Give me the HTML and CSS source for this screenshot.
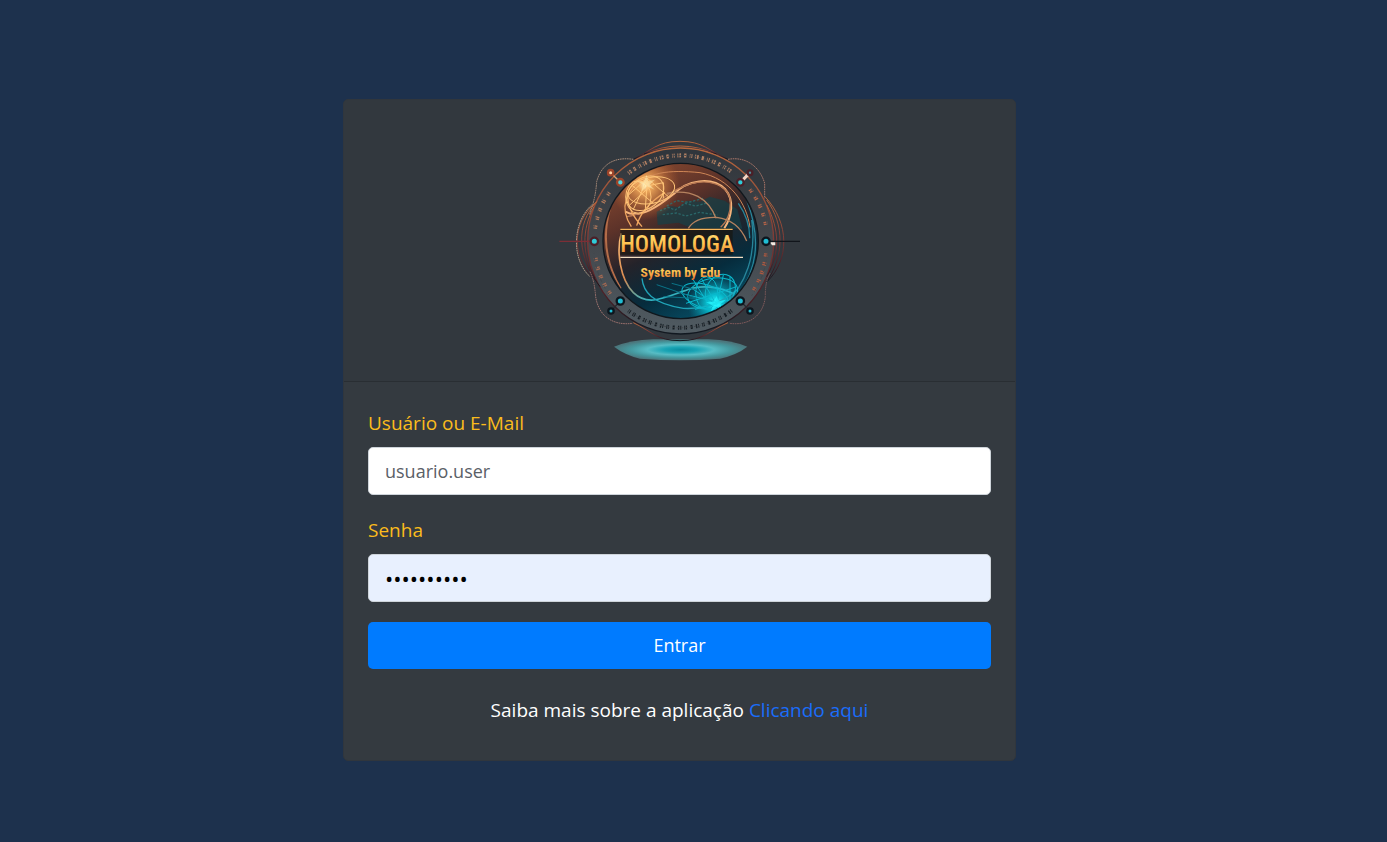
FILE: index.html
```html
<!DOCTYPE html>
<html lang="pt-BR">
<head>
    <meta charset="UTF-8">
    <meta name="viewport" content="width=device-width, initial-scale=1.0">
    <title>Homologa - Login</title>
    <link rel="stylesheet" href="styles.css">
</head>
<body>
    <main class="login-card">
        <div class="card-header">
            <svg class="logo" viewBox="0 0 780 720" role="img" aria-label="Homologa System by Edu">
                <defs>
                    <linearGradient id="sphere" x1="0.2" y1="0" x2="0.7" y2="1">
                        <stop offset="0" stop-color="#8a4a30"/>
                        <stop offset="0.3" stop-color="#5c3229"/>
                        <stop offset="0.52" stop-color="#24232a"/>
                        <stop offset="0.75" stop-color="#062c3d"/>
                        <stop offset="1" stop-color="#075067"/>
                    </linearGradient>
                    <linearGradient id="ring" x1="0" y1="0" x2="0" y2="1">
                        <stop offset="0" stop-color="#b9683c"/>
                        <stop offset="0.5" stop-color="#7d3935"/>
                        <stop offset="0.8" stop-color="#491f26"/>
                        <stop offset="1" stop-color="#101820"/>
                    </linearGradient>
                    <linearGradient id="band" x1="0" y1="0" x2="0" y2="1">
                        <stop offset="0" stop-color="#30353b"/>
                        <stop offset="0.5" stop-color="#43474c"/>
                        <stop offset="1" stop-color="#505b62"/>
                    </linearGradient>
                    <linearGradient id="wire" x1="0" y1="0" x2="0.4" y2="1">
                        <stop offset="0" stop-color="#ffc17a"/>
                        <stop offset="0.6" stop-color="#d98a50"/>
                        <stop offset="1" stop-color="#20b6cc"/>
                    </linearGradient>
                    <linearGradient id="gold" x1="0" y1="0" x2="0" y2="1">
                        <stop offset="0" stop-color="#ffe07a"/>
                        <stop offset="0.5" stop-color="#ffc350"/>
                        <stop offset="1" stop-color="#e5702c"/>
                    </linearGradient>
                    <radialGradient id="flare">
                        <stop offset="0" stop-color="#fff3c4"/>
                        <stop offset="0.2" stop-color="#ffb660" stop-opacity="0.85"/>
                        <stop offset="1" stop-color="#c8622c" stop-opacity="0"/>
                    </radialGradient>
                    <radialGradient id="spark">
                        <stop offset="0" stop-color="#35faff"/>
                        <stop offset="0.3" stop-color="#08d5e6" stop-opacity="0.85"/>
                        <stop offset="1" stop-color="#079db5" stop-opacity="0"/>
                    </radialGradient>
                    <radialGradient id="base">
                        <stop offset="0" stop-color="#0a8fa2"/>
                        <stop offset="0.25" stop-color="#1ba5b5"/>
                        <stop offset="0.5" stop-color="#57bcc4"/>
                        <stop offset="0.75" stop-color="#45999f"/>
                        <stop offset="1" stop-color="#4b777d"/>
                    </radialGradient>
                    <clipPath id="globe"><circle cx="392" cy="333" r="230"/></clipPath>
                </defs>

                <!-- light under the globe -->
                <path d="M192 650Q240 631 310 628H475Q545 631 592 650Q560 675 510 686Q390 695 270 686Q225 675 192 650Z" fill="url(#base)"/>

                <!-- outer ring -->
                <circle cx="392" cy="333" r="279" fill="url(#band)" stroke="url(#ring)" stroke-width="4"/>
                <g fill="none" stroke="url(#ring)" stroke-width="3">
                    <path d="M250 88C305 62 320 34 390 34S475 62 534 88"/>
                    <path d="M250 578C305 604 320 632 390 632S475 604 534 578"/>
                    <path d="M282 72Q390 24 500 72"/>
                    <path d="M140 215C60 280 65 390 140 454M140 215C75 285 82 380 150 470M132 230C95 300 95 370 135 445"/>
                    <path d="M645 200C720 280 718 390 652 454M650 210C705 285 702 380 650 455M650 225C690 300 690 370 650 440"/>
                </g>
                <g fill="none" stroke-width="3" stroke-dasharray="5 2">
                    <path d="M250 88C195 80 155 100 140 155Q137 205 118 255" stroke="#a98b78"/>
                    <path d="M534 88C590 78 630 112 644 160V205" stroke="#a87568"/>
                    <path d="M120 425Q133 450 137 500C145 555 185 588 248 580" stroke="#9b716d"/>
                    <path d="M660 430Q645 455 646 500C640 555 600 588 538 580" stroke="#805a5b"/>
                    <path d="M125 225C65 280 65 390 120 440" stroke="#b39b85"/>
                </g>

                <!-- runes -->
                <g fill="none" stroke-width="12">
                    <path d="M235 130A258 258 0 0 1 548 128" stroke="#b28063" stroke-dasharray="3 3 5 9 7 10 2 3 3 8"/>
                    <path d="M600 178A260 260 0 0 1 650 298" stroke="#b46449" stroke-dasharray="4 2 4 17"/>
                    <path d="M648 370A260 260 0 0 1 602 495" stroke="#ae5940" stroke-dasharray="4 2 4 17"/>
                    <path d="M545 542A260 260 0 0 1 235 542" stroke="#161e24" stroke-dasharray="3 3 4 10 6 11 3 2 3 9"/>
                    <path d="M181 492A260 260 0 0 1 135 370" stroke="#a46952" stroke-dasharray="4 2 4 17"/>
                    <path d="M135 296A260 260 0 0 1 184 178" stroke="#b27a5b" stroke-dasharray="4 2 4 17"/>
                </g>
                <g fill="none" stroke="#43474c" stroke-width="3">
                    <path d="M235 130A258 258 0 0 1 548 128" stroke-dasharray="9 7"/>
                    <path d="M545 542A260 260 0 0 1 235 542" stroke-dasharray="7 6"/>
                    <path d="M602 174A264 264 0 0 1 654 298M652 370A264 264 0 0 1 605 497M178 494A264 264 0 0 1 131 370M131 296A264 264 0 0 1 181 175" stroke-dasharray="13 9"/>
                </g>

                <!-- globe -->
                <circle cx="392" cy="333" r="233" fill="url(#sphere)" stroke="#10171d" stroke-width="4"/>
                <g clip-path="url(#globe)" fill="none">
                    <path d="M320 245l38-18 28 5 25-20 40 3 28-15 45 12 38 26 15 58H430l-45-18-62 7z" fill="#164047" opacity="0.7"/>
                    <path d="M330 242l25-10 20 8 30-20 32 8 38-10M338 254l42-5 28 9 40-11 55 8M350 228l30-16 35 5 45-12" stroke="#2a6668" stroke-width="4" stroke-dasharray="7 5"/>
                    <circle cx="285" cy="165" r="105" fill="url(#flare)"/>
                    <circle cx="497" cy="520" r="85" fill="url(#spark)"/>

                    <path d="M197 190C155 275 155 380 207 465M181 235C160 310 165 395 213 475" stroke="#b46d49" stroke-width="4"/>
                    <path d="M605 270C620 370 590 465 520 525M590 210C640 340 610 430 570 487M565 220Q600 270 599 325" stroke="#278499" stroke-width="4"/>
                    <path d="M252 172C290 128 355 118 450 128C540 145 590 220 600 292" stroke="#ce8656" stroke-width="3"/>
                    <path d="M214 310C198 365 211 448 250 488C295 532 350 500 405 482C450 462 510 470 552 492" stroke="url(#wire)" stroke-width="5"/>
                    <path d="M226 245C270 270 330 225 370 193C410 150 485 138 525 177C555 212 545 260 523 295" stroke="#f5b47b" stroke-width="6"/>
                    <path d="M230 260C300 250 330 202 385 176C470 132 544 167 541 218Q542 264 512 292" stroke="#b77752" stroke-width="4"/>
                    <path d="M350 190C425 175 475 205 498 265M415 295Q435 260 500 262Q565 270 590 333" stroke="#b5825f" stroke-width="4"/>
                    <path d="M276 290C255 265 230 235 234 187M244 290C205 230 230 180 285 143M260 287Q276 230 345 187" stroke="#efa660" stroke-width="4"/>
                    <path d="M276 445C280 485 305 520 400 535Q490 540 560 480" stroke="#20a4b8" stroke-width="4"/>

                    <!-- warm tangle -->
                    <g stroke="#ffc578" stroke-width="3">
                        <ellipse cx="286" cy="190" rx="61" ry="45" transform="rotate(-38 286 190)"/>
                        <ellipse cx="304" cy="181" rx="71" ry="39" transform="rotate(-12 304 181)"/>
                        <ellipse cx="265" cy="201" rx="38" ry="49"/>
                        <path d="M232 198L292 145L354 199M240 224L305 165L340 158V205M245 165L310 220M250 238L292 150L286 236"/>
                    </g>
                    <path d="M290 134L295 153L315 149L299 164L314 179L291 169L273 185L280 164L260 154L281 155Z" fill="#fff0b3" opacity="0.5"/>

                    <!-- cold tangle -->
                    <g stroke="#0bb8cc" stroke-width="3">
                        <ellipse cx="488" cy="490" rx="76" ry="45" transform="rotate(-12 488 490)"/>
                        <ellipse cx="465" cy="499" rx="72" ry="35" transform="rotate(18 465 499)"/>
                        <ellipse cx="511" cy="482" rx="42" ry="52" transform="rotate(32 511 482)"/>
                        <ellipse cx="470" cy="489" rx="33" ry="49"/>
                        <path d="M408 520L560 470M424 474L500 525L455 447M500 525L520 435M435 538L558 505M393 490L550 528M430 450L480 530M540 440L540 515"/>
                        <path d="M320 464L440 505M340 500L440 505M365 460L440 480" stroke="#0b7488"/>
                    </g>
                    <path d="M500 498L506 514L528 509L511 523L522 540L500 531L482 546L489 527L468 517L490 515Z" fill="#24f6ff" opacity="0.7"/>
                </g>

                <!-- nodes -->
                <g fill="none" stroke-width="4">
                    <path d="M28 334H130" stroke="#7c2e36"/>
                    <path d="M650 334H750" stroke="#11151b"/>
                    <path d="M182 128L211 157" stroke="#dda06f"/>
                    <path d="M600 128L571 157" stroke="#f2d4c4" stroke-width="9"/>
                    <path d="M211 513L183 543M571 513L600 543" stroke="#252a30"/>
                </g>
                <path d="M660 337h16v9h-10z" fill="#f2e9e2"/>
                <g stroke-width="7">
                    <g fill="#53d5dc" stroke="#9c4329">
                        <circle cx="182" cy="128" r="8" fill="#ffd5a9"/>
                        <circle cx="211" cy="157" r="10"/>
                    </g>
                    <g fill="#2fcbd8" stroke="#4a2028">
                        <circle cx="133" cy="334" r="11"/>
                        <circle cx="600" cy="128" r="7" fill="#538d99"/>
                        <circle cx="571" cy="157" r="10"/>
                    </g>
                    <g fill="#20bdd3" stroke="#0d161e">
                        <circle cx="648" cy="334" r="11"/>
                        <circle cx="211" cy="513" r="11"/>
                        <circle cx="183" cy="543" r="8"/>
                        <circle cx="571" cy="513" r="11"/>
                        <circle cx="600" cy="543" r="8"/>
                    </g>
                </g>

                <!-- lettering -->
                <path d="M211 296H548V374H211Z" fill="#17150f" opacity="0.65"/>
                <path d="M211 298H548" stroke="#f5b65c" stroke-width="4"/>
                <path d="M211 382H579" stroke="#f5dfc2" stroke-width="4"/>
                <text class="logo-name" x="381" y="365" fill="url(#gold)">HOMOLOGA</text>
                <text class="logo-sub" x="391" y="440" fill="url(#gold)">System by Edu</text>
            </svg>
        </div>
        <form class="card-body">
            <div class="form-group">
                <label for="usuario">Usuário ou E-Mail</label>
                <input type="text" id="usuario" name="usuario" class="form-control" placeholder="usuario.user">
            </div>
            <div class="form-group">
                <label for="senha">Senha</label>
                <input type="password" id="senha" name="senha" class="form-control filled" value="homologa10">
            </div>
            <button type="submit" class="btn-entrar">Entrar</button>
            <p class="about">Saiba mais sobre a aplicação <a href="#">Clicando aqui</a></p>
        </form>
    </main>
</body>
</html>
```
FILE: styles.css
```css
* { box-sizing: border-box; }
body {
    margin: 0;
    min-height: 100vh;
    padding: 20px 28px 3px 0;
    display: flex;
    align-items: center;
    justify-content: center;
    background-color: #1d314d;
    color: #fff;
    font-family: "Segoe UI", "Open Sans", "Noto Sans", sans-serif;
    font-size: 19px;
    line-height: 30px;
}
.login-card {
    width: 100%;
    max-width: 673px;
    background-color: #343a40;
    border: 1px solid #30363d;
    border-radius: 5px;
}
.card-header {
    padding: 30px 24px 11px;
    text-align: center;
    background-color: #32383e;
    border-bottom: 1px solid #292e33;
    border-radius: 4px 4px 0 0;
}
.logo {
    display: block;
    width: 260px;
    height: 240px;
    margin: 0 auto;
}
.logo-name, .logo-sub {
    font-family: "Roboto Condensed", Roboto, sans-serif;
    text-anchor: middle;
}
.logo-name { font-size: 71px; font-weight: 500; }
.logo-sub { font-size: 41px; font-weight: bold; }
.card-body { padding: 26px 24px 35px; }
.form-group { margin-bottom: 20px; }
.form-group label {
    display: block;
    margin-bottom: 9px;
    color: #fbbc1c;
}
.form-control {
    display: block;
    width: 100%;
    height: 48px;
    padding: 8px 16px;
    border: 1px solid #ced4da;
    border-radius: 5px;
    background-color: #fff;
    color: #000;
    font: inherit;
    font-size: 18px;
}
.form-control::placeholder { color: #5a6067; opacity: 1; }
.form-control.filled {
    background-color: #e8f0fe;
    font-size: 22px;
}
.btn-entrar {
    display: block;
    width: 100%;
    height: 47px;
    border: 0;
    border-radius: 5px;
    background-color: #007bff;
    color: #fff;
    font: inherit;
    font-size: 18px;
    cursor: pointer;
}
.about {
    margin: 26px 0 0;
    text-align: center;
}
.about a { color: #1a6dfa; text-decoration: none; }
```
